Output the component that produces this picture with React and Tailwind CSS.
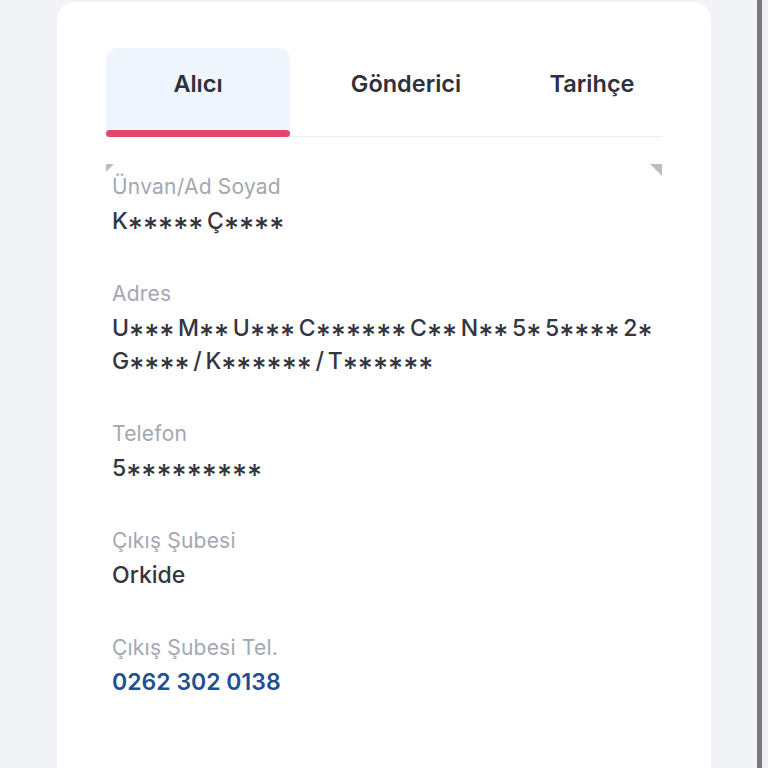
import React, { useState } from 'react';

const fields = [
  { label: 'Ünvan/Ad Soyad', lines: ['K***** Ç****'] },
  { label: 'Adres', lines: ['U*** M** U*** C****** C** N** 5* 5**** 2*', 'G**** / K****** / T******'] },
  { label: 'Telefon', lines: ['5*********'] },
  { label: 'Çıkış Şubesi', lines: ['Orkide'] },
  { label: 'Çıkış Şubesi Tel.', lines: ['0262 302 0138'], phone: true },
];

const tabs = [
  { name: 'Alıcı', w: 'w-[184px]' },
  { name: 'Gönderici', w: 'w-[232px]' },
  { name: 'Tarihçe', w: 'flex-1' },
];

// masked characters sit lower and are larger than the font's own asterisk
function Masked({ text }) {
  return text.split('').map((ch, i) =>
    ch === '*' ? (
      <span key={i} className="relative top-[9px] text-[29px] leading-[0]">
        *
      </span>
    ) : (
      <span key={i}>{ch}</span>
    )
  );
}

export default function App() {
  const [active, setActive] = useState(0);

  return (
    <div className="h-[768px] w-[768px] overflow-hidden bg-[#f2f3f7] flex font-['Inter',sans-serif]">
      {/* Main card */}
      <div className="ml-[57px] mt-[2px] w-[654px] h-[800px] bg-white rounded-t-[18px] px-[49px] pt-[46px]">
        {/* Tabs */}
        <div className="flex border-b border-[#eceef2]">
          {tabs.map((t, i) => (
            <button
              key={t.name}
              onClick={() => setActive(i)}
              className={`${t.w} relative h-[88px] pb-[16px] text-[23.5px] font-semibold text-[#2e313b] rounded-t-[12px] ${
                i === active ? 'bg-[#eef5fc]' : 'bg-transparent'
              }`}
            >
              {t.name}
              {i === active && (
                <span className="absolute left-0 right-0 bottom-[-1px] h-[7px] rounded-full bg-[#e0486a]" />
              )}
            </button>
          ))}
        </div>

        {/* Details panel */}
        <div className="relative mt-[27px] h-[620px] bg-white pl-[6px] pt-[5px]">
          <span className="absolute left-0 top-0 w-0 h-0 border-t-[8px] border-r-[8px] border-t-[#bdbdbd] border-r-transparent" />
          <span className="absolute right-0 top-0 w-0 h-0 border-t-[12px] border-l-[12px] border-t-[#bdbdbd] border-l-transparent" />
          <div className="flex flex-col gap-[38px]">
            {fields.map((f) => (
              <div key={f.label}>
                <div className="text-[21px] leading-[36px] tracking-[0.01em] text-[#a4a7b1]">{f.label}</div>
                {f.lines.map((l) => (
                  <div
                    key={l}
                    className={`whitespace-nowrap text-[23px] leading-[33px] font-medium ${
                      f.phone ? 'font-semibold text-[#1f4f93]' : 'text-[#33363f] [word-spacing:-2.5px]'
                    }`}
                  >
                    <Masked text={l} />
                  </div>
                ))}
              </div>
            ))}
          </div>
        </div>
      </div>

      {/* Scrollbar strip */}
      <div className="ml-[46px] w-[5px] h-full bg-[#7a7a7a]" />
      <div className="flex-1 h-full bg-[#f0f0f2]" />
    </div>
  );
}
